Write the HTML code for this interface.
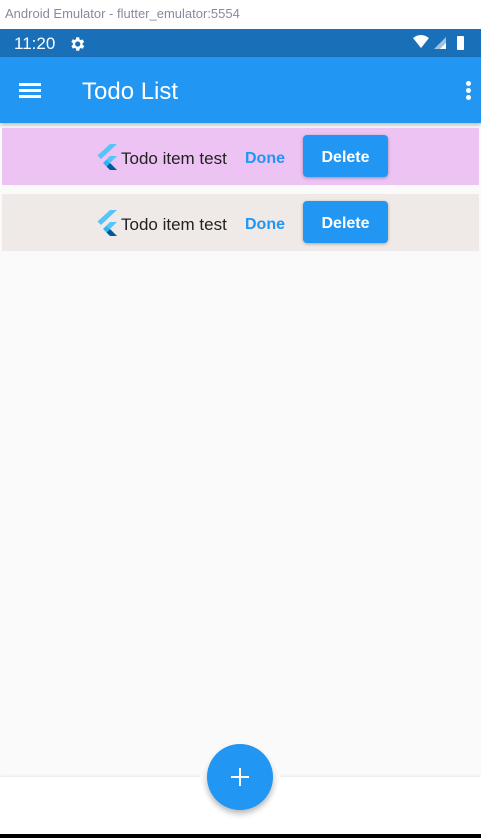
<!DOCTYPE html>
<html><head><style>
body{margin:0;width:481px;height:838px;overflow:hidden;background:#fafafa;font-family:"Liberation Sans",sans-serif;position:relative}
.abs{position:absolute}
.item{position:absolute;left:2px;width:477px;height:57px}
.t{position:absolute;font-size:17px;color:#222;top:20px}
.done{position:absolute;top:21px;font-size:16px;font-weight:bold;color:#2196f3}
.del{position:absolute;left:301px;top:7px;width:85px;height:42px;background:#2196f3;border-radius:4px;color:#fff;font-weight:bold;font-size:16px;text-align:center;line-height:46px;box-shadow:0 1px 3px rgba(0,0,0,.3)}
</style></head><body>
<div class="abs" style="left:0;top:0;width:481px;height:29px;background:#fff"></div>
<div class="abs" style="left:5px;top:6px;font-size:13px;color:#8a8a9a">Android Emulator - flutter_emulator:5554</div>
<div class="abs" style="left:0;top:29px;width:481px;height:28px;background:#1a70b8"></div>
<div class="abs" style="left:14px;top:34px;font-size:17px;color:#fff">11:20</div>
<svg class="abs" style="left:68px;top:35px" width="18" height="18" viewBox="0 0 24 24"><path fill="#fff" d="M19.4 13a7.5 7.5 0 000-2l2.1-1.6-2-3.5-2.5 1a7 7 0 00-1.7-1L15 3h-4l-.4 2.6a7 7 0 00-1.7 1l-2.5-1-2 3.5L6.6 11a7.5 7.5 0 000 2l-2.1 1.6 2 3.5 2.5-1a7 7 0 001.7 1L11 21h4l.4-2.6a7 7 0 001.7-1l2.5 1 2-3.5zM13 15.5a3.5 3.5 0 110-7 3.5 3.5 0 010 7z"/></svg>
<svg class="abs" style="left:412px;top:35px" width="56" height="16" viewBox="0 0 56 16"><path fill="#fff" d="M1 3Q9-3 17 3L9 13z"/><path fill="#9cc3e6" d="M22 14L34 2V14z"/><path fill="#fff" d="M28 14L34 8V14z"/><rect x="45" y="1" width="7" height="14" rx="1" fill="#fff"/></svg>
<div class="abs" style="left:0;top:57px;width:481px;height:66px;background:#2196f3;box-shadow:0 2px 4px rgba(0,0,0,.25)"></div>
<div class="abs" style="left:19px;top:83px;width:22px;height:3px;background:#fff;box-shadow:0 6px 0 #fff,0 12px 0 #fff"></div>
<div class="abs" style="left:82px;top:78px;font-size:24px;color:#fff">Todo List</div>
<div class="abs" style="left:466px;top:81px;width:5px;height:5px;border-radius:50%;background:#fff;box-shadow:0 7px 0 #fff,0 14px 0 #fff"></div>

<div class="item" style="top:128px;background:#ecc3f3">
<svg class="abs" style="left:94px;top:16px" width="22" height="26" viewBox="0 0 22 26"><path fill="#54c5f8" d="M14 0h7L5 15 1.5 11.5z"/><path fill="#54c5f8" d="M14 12h7l-7 7-3.5-3.5z"/><path fill="#01579b" d="M10.5 22.5L14 26h7l-7-7z"/><path fill="#29b6f6" d="M7 19l3.5-3.5L14 19l-3.5 3.5z"/></svg>
<div class="t" style="left:119px;top:21px">Todo item test</div><div class="done" style="left:243px;top:22px">Done</div><div class="del">Delete</div></div>
<div class="item" style="top:194px;background:#efeae7">
<svg class="abs" style="left:94px;top:16px" width="22" height="26" viewBox="0 0 22 26"><path fill="#54c5f8" d="M14 0h7L5 15 1.5 11.5z"/><path fill="#54c5f8" d="M14 12h7l-7 7-3.5-3.5z"/><path fill="#01579b" d="M10.5 22.5L14 26h7l-7-7z"/><path fill="#29b6f6" d="M7 19l3.5-3.5L14 19l-3.5 3.5z"/></svg>
<div class="t" style="left:119px;top:21px">Todo item test</div><div class="done" style="left:243px;top:22px">Done</div><div class="del">Delete</div></div>

<div class="abs" style="left:0;top:777px;width:481px;height:57px;background:#fff;box-shadow:0 -1px 3px rgba(0,0,0,.08)"></div>
<div class="abs" style="left:0;top:834px;width:481px;height:4px;background:#000"></div>
<div class="abs" style="left:200px;top:770px;width:80px;height:42px;border-radius:0 0 40px 40px;background:#fafafa"></div>
<div class="abs" style="left:207px;top:744px;width:66px;height:66px;border-radius:50%;background:#2196f3;box-shadow:0 4px 6px rgba(0,0,0,.25)"></div>
<div class="abs" style="left:231px;top:776px;width:18px;height:2px;background:#fff"></div>
<div class="abs" style="left:239px;top:768px;width:2px;height:18px;background:#fff"></div>
</body></html>
